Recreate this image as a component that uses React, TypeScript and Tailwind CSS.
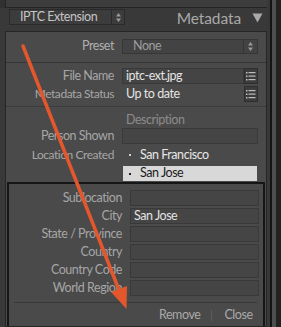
import React from "react";

const font = { fontFamily: "Lato, 'Open Sans', sans-serif" };

function UpDown() {
  return (
    <svg width="7" height="11" viewBox="0 0 7 11" className="block">
      <path d="M3.5 1 L6 4.5 H1 Z" fill="#9a9a9a" />
      <path d="M3.5 10 L6 6.5 H1 Z" fill="#9a9a9a" />
    </svg>
  );
}

function ListIcon() {
  return (
    <div className="w-[14px] h-[16px] border border-[#2e2e2e] bg-[#3c3c3c] flex items-center justify-center">
      <svg width="10" height="9" viewBox="0 0 10 9" className="block">
        <rect x="0" y="0" width="1.5" height="1.5" fill="#bdbdbd" />
        <rect x="2.5" y="0" width="7" height="1.2" fill="#bdbdbd" />
        <rect x="0" y="3.5" width="1.5" height="1.5" fill="#bdbdbd" />
        <rect x="2.5" y="3.5" width="7" height="1.2" fill="#bdbdbd" />
        <rect x="0" y="7" width="1.5" height="1.5" fill="#bdbdbd" />
        <rect x="2.5" y="7" width="7" height="1.2" fill="#bdbdbd" />
      </svg>
    </div>
  );
}

function SubRow({ label, value }: { label: string; value?: string }) {
  return (
    <div className="flex items-center h-[16px] mb-[2px]">
      <div className="w-[113px] text-right text-[12.5px] text-[#a6a6a6] leading-none whitespace-nowrap">{label}</div>
      <div className="ml-[8px] w-[129px] h-[16px] bg-[#454545] border border-[#393939] flex items-center pl-[3px] text-[12.5px] text-[#e2e2e2] leading-none">
        {value}
      </div>
    </div>
  );
}

export default function App() {
  return (
    <div className="relative w-[281px] h-[327px] overflow-hidden bg-[#393939] flex tracking-[-0.45px]" style={font}>
      <div className="w-[267px] flex flex-col">
        {/* top strip */}
        <div className="h-[8px] flex">
          <div className="w-[5px] bg-[#313131]" />
          <div className="flex-1 bg-[#3d3d3d] border-l border-b border-[#242424]" />
        </div>
        {/* header */}
        <div className="h-[23px] flex items-start">
          <div className="ml-[9px] mt-[1px] w-[116px] h-[16px] border border-[#2a2a2a] bg-[#3c3c3c] flex items-center">
            <div className="flex-1 pl-[10px] text-[12.5px] text-[#c4c4c4] leading-none">IPTC Extension</div>
            <div className="w-[13px] h-full border-l border-[#2a2a2a] flex items-center justify-center">
              <UpDown />
            </div>
          </div>
          <div className="ml-auto mt-[3px] text-[15.5px] text-[#a9a9a9] leading-none tracking-[-0.1px]">Metadata</div>
          <svg width="11" height="10" viewBox="0 0 11 10" className="ml-[11px] mt-[5px] mr-[4px]">
            <path d="M0.5 0.5 H10.5 L5.5 9.5 Z" fill="#a9a9a9" />
          </svg>
        </div>
        {/* main panel */}
        <div className="flex-1 ml-[5px] border border-[#262626] bg-[#4a4a4a] flex flex-col">
          <div className="flex items-center mt-[7px] h-[15px]">
            <div className="w-[108px] text-right text-[12.5px] text-[#b0b0b0] leading-none">Preset</div>
            <div className="ml-[8px] w-[136px] h-[15px] bg-[#434343] border border-[#363636] flex items-center">
              <div className="flex-1 pl-[10px] text-[12.5px] text-[#9c9c9c] leading-none">None</div>
              <div className="w-[14px] h-full border-l border-[#363636] flex items-center justify-center">
                <UpDown />
              </div>
            </div>
          </div>
          <div className="mt-[8px] h-px bg-[#363636]" />
          <div className="flex items-center mt-[5px] h-[16px]">
            <div className="w-[108px] text-right text-[12.5px] text-[#a6a6a6] leading-none">File Name</div>
            <div className="ml-[8px] w-[122px] h-[16px] bg-[#444444] border border-[#393939] flex items-center pl-[3px] text-[12.5px] text-[#e4e4e4] leading-none">
              iptc-ext.jpg
            </div>
            <ListIcon />
          </div>
          <div className="flex items-center mt-[2px] h-[16px]">
            <div className="w-[108px] text-right text-[12px] text-[#a6a6a6] leading-none whitespace-nowrap">Metadata Status</div>
            <div className="ml-[8px] w-[122px] pl-[4px] text-[12.5px] text-[#e4e4e4] leading-none">Up to date</div>
            <ListIcon />
          </div>
          <div className="mt-[4px] h-px bg-[#3b3b3b]" />
          <div className="mt-[7px] h-[12px] ml-[120px] text-[12.5px] text-[#8c8c8c] leading-none">Description</div>
          <div className="flex items-center mt-[2px] h-[16px]">
            <div className="w-[108px] text-right text-[12.5px] text-[#a6a6a6] leading-none whitespace-nowrap">Person Shown</div>
            <div className="ml-[8px] w-[136px] h-[16px] bg-[#454545] border border-[#393939]" />
          </div>
          <div className="flex items-center mt-[3px] h-[16px]">
            <div className="w-[108px] text-right text-[12px] text-[#a6a6a6] leading-none whitespace-nowrap">Location Created</div>
            <div className="ml-[15px] w-[2px] h-[2px] bg-[#d0d0d0]" />
            <div className="ml-[9px] text-[12.5px] text-[#e6e6e6] leading-none">San Francisco</div>
          </div>
          <div className="flex items-center mt-[3px] h-[15px]">
            <div className="ml-[117px] w-[134px] h-[15px] bg-[#d8d8d8] flex items-center">
              <div className="ml-[6px] w-[2px] h-[2px] bg-[#222]" />
              <div className="ml-[9px] text-[12.5px] text-[#1c1c1c] leading-none">San Jose</div>
            </div>
          </div>
          {/* sub panel */}
          <div className="flex-1 mt-[1px] ml-[1px] mr-[1px] border-[2px] border-b-0 border-[#161616] bg-[#4a4a4a] flex flex-col">
            <div className="mt-[6px]" />
            <SubRow label="Sublocation" />
            <SubRow label="City" value="San Jose" />
            <SubRow label="State / Province" />
            <SubRow label="Country" />
            <SubRow label="Country Code" />
            <SubRow label="World Region" />
            <div className="mt-[4px] ml-[5px] w-[243px] h-px bg-[#383838]" />
            <div className="flex items-center mt-[6px] h-[12px] text-[12.5px] text-[#a9a9a9] leading-none">
              <div className="ml-[150px]">Remove</div>
              <div className="ml-[11px] w-px h-[11px] bg-[#5c5c5c]" />
              <div className="ml-[12px]">Close</div>
            </div>
          </div>
        </div>
      </div>
      {/* right edge */}
      <div className="w-[3px] bg-[#383838]" />
      <div className="w-[2px] bg-[#141414]" />
      <div className="w-[4px] bg-[#4e4e4e]" />
      <div className="w-[5px] bg-[#222222]" />
      {/* arrow overlay */}
      <svg className="absolute left-0 top-0 pointer-events-none" width="281" height="327" viewBox="0 0 281 327">
        <line x1="23" y1="46" x2="119" y2="290" stroke="#e4572c" strokeWidth="3.5" strokeLinecap="round" />
        <path d="M111 292 L127 286 L126.5 309 Z" fill="#e4572c" />
      </svg>
    </div>
  );
}
